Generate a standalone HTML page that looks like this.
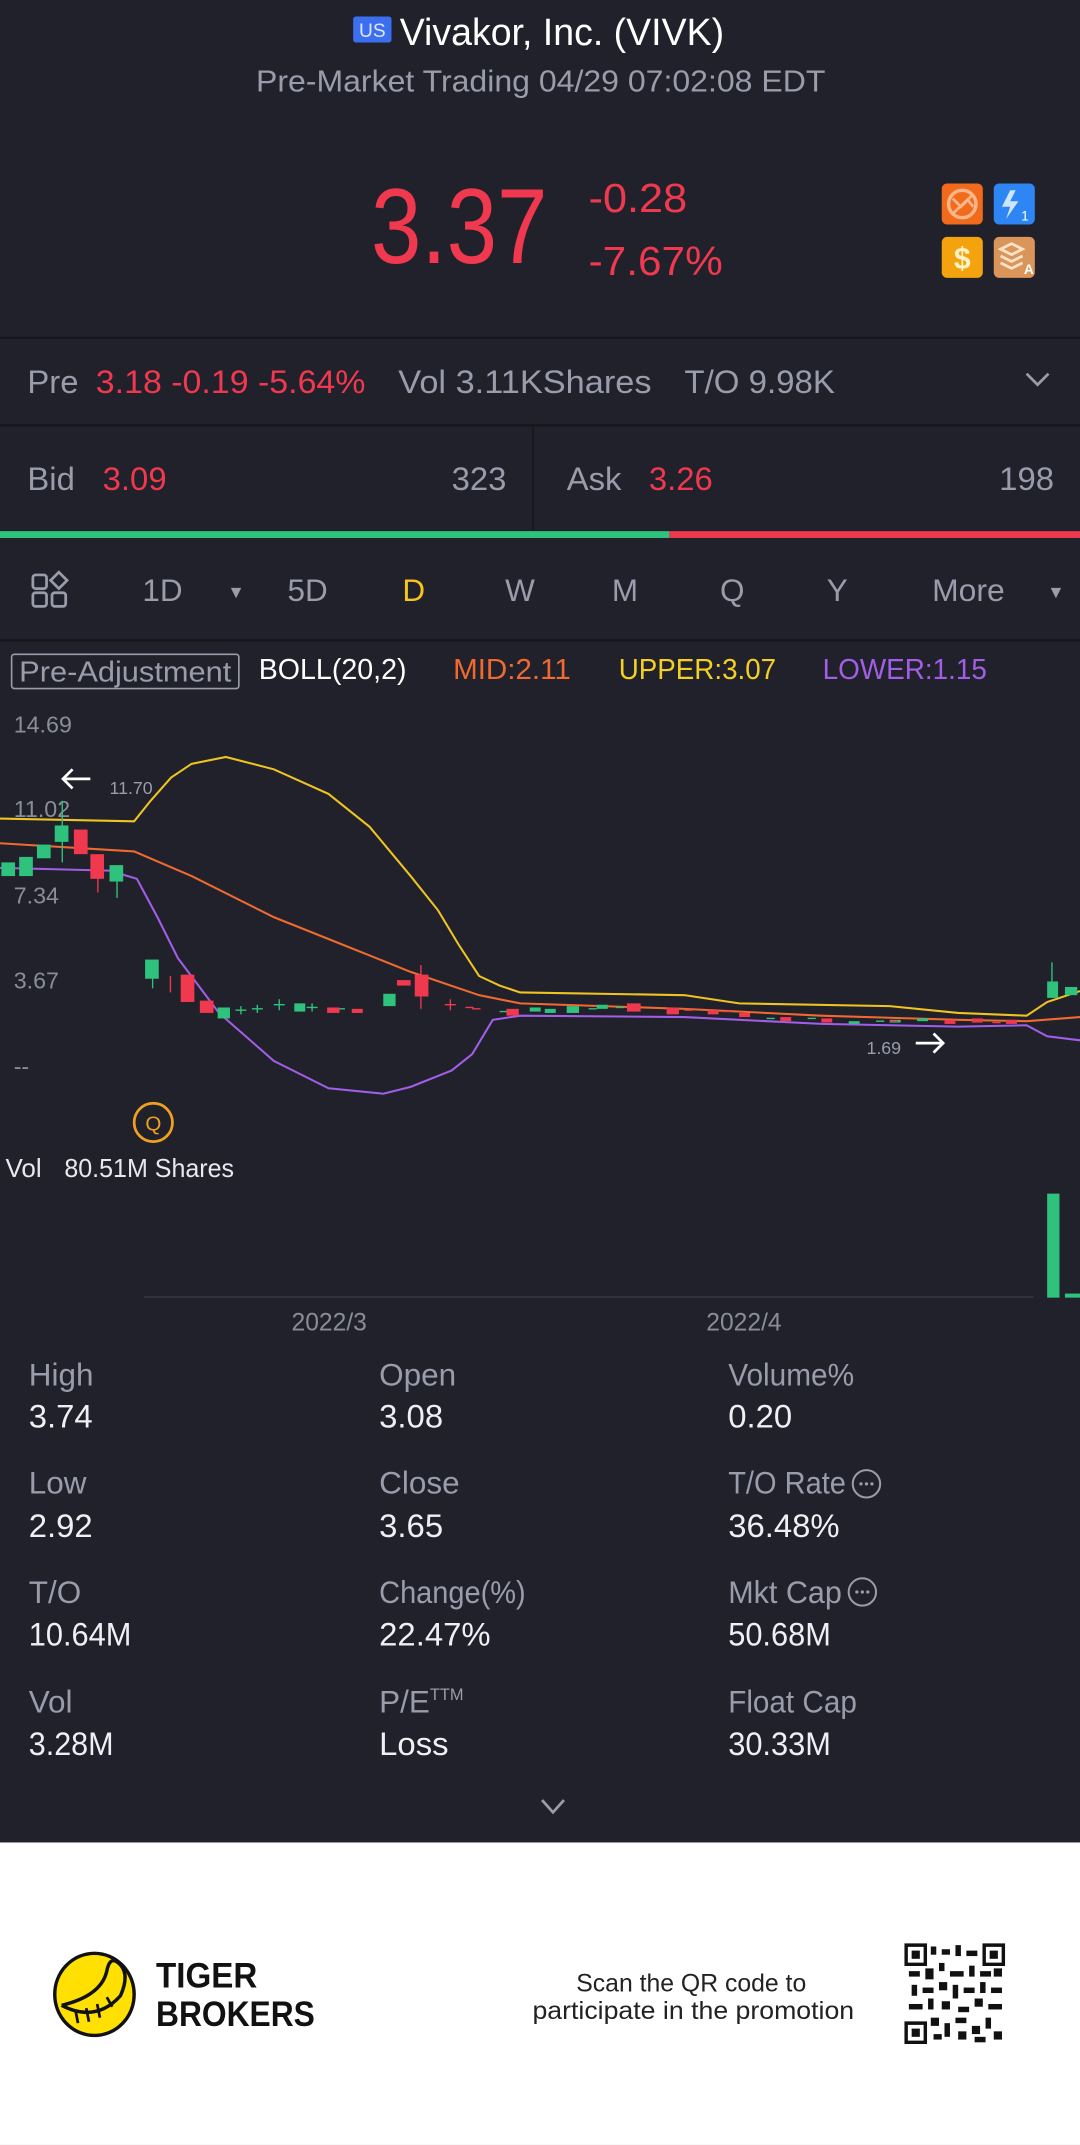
<!DOCTYPE html>
<html><head><meta charset="utf-8"><style>
html,body{margin:0;padding:0;background:#20212b;}
svg{display:block}
text{font-family:"Liberation Sans Narrow","Liberation Sans",sans-serif;}
</style></head><body>
<svg width="1080" height="2145" viewBox="0 0 789 1567" xmlns="http://www.w3.org/2000/svg">
<rect x="0" y="0" width="789" height="1347" fill="#20212b"/>
<rect x="0" y="1346" width="789" height="221" fill="#ffffff"/>
<!-- header -->
<rect x="258" y="12" width="28" height="19" rx="2" fill="#3b6ff0"/>
<text x="272" y="27" font-size="14" fill="#dfe6ff" text-anchor="middle">US</text>
<text x="292" y="33" font-size="28" fill="#ffffff" textLength="237" lengthAdjust="spacingAndGlyphs">Vivakor, Inc. (VIVK)</text>
<text x="187" y="67" font-size="22" fill="#9a9cab" textLength="416" lengthAdjust="spacingAndGlyphs">Pre-Market Trading 04/29 07:02:08 EDT</text>
<text x="271" y="192" font-size="78" fill="#f0384e" textLength="129" lengthAdjust="spacingAndGlyphs">3.37</text>
<text x="430" y="155" font-size="30" fill="#f0384e" textLength="72" lengthAdjust="spacingAndGlyphs">-0.28</text>
<text x="430" y="201" font-size="30" fill="#f0384e" textLength="98" lengthAdjust="spacingAndGlyphs">-7.67%</text>
<!-- icons -->
<rect x="688" y="134" width="30" height="30" rx="4" fill="#f26b1d"/>
<circle cx="703" cy="149" r="10" fill="none" stroke="#fbb68a" stroke-width="2.5"/>
<path d="M696 145 L702 151 L707 146 L711 151 M696 156 L711 142" stroke="#fbb68a" stroke-width="2" fill="none"/>
<rect x="726" y="134" width="30" height="30" rx="4" fill="#2e86f5"/>
<path d="M738 139 L732 151 L738 151 L735 160 L744 147 L738 147 L742 139 Z" fill="#cfe4ff"/>
<text x="746" y="161" font-size="10" fill="#fff">1</text>
<rect x="688" y="173" width="30" height="30" rx="4" fill="#f5a20f"/>
<text x="703" y="196" font-size="22" fill="#fff3c8" text-anchor="middle" font-weight="bold">$</text>
<rect x="726" y="173" width="30" height="30" rx="4" fill="#d9955a"/>
<path d="M731 182 L739 178 L747 182 L739 186 Z M731 187 L739 191 L747 187 M731 192 L739 196 L747 192" stroke="#fbe3c8" stroke-width="2" fill="none"/>
<text x="748" y="200" font-size="10" fill="#fff" font-weight="bold">A</text>
<!-- pre row -->
<rect x="0" y="246" width="789" height="1.5" fill="#14151c"/>
<text x="20" y="287" font-size="24" fill="#9a9cab">Pre</text>
<text x="70" y="287" font-size="24" fill="#f0384e" textLength="197" lengthAdjust="spacingAndGlyphs">3.18 -0.19 -5.64%</text>
<text x="291" y="287" font-size="24" fill="#9a9cab" textLength="185" lengthAdjust="spacingAndGlyphs">Vol 3.11KShares</text>
<text x="500" y="287" font-size="24" fill="#9a9cab" textLength="110" lengthAdjust="spacingAndGlyphs">T/O 9.98K</text>
<path d="M750 273 L758 281 L766 273" stroke="#9a9cab" stroke-width="2" fill="none"/>
<rect x="0" y="310" width="789" height="1.5" fill="#14151c"/>
<text x="20" y="358" font-size="24" fill="#9a9cab">Bid</text>
<text x="75" y="358" font-size="24" fill="#f0384e">3.09</text>
<text x="370" y="358" font-size="24" fill="#9a9cab" text-anchor="end">323</text>
<rect x="389" y="311" width="1" height="77" fill="#14151c"/>
<text x="414" y="358" font-size="24" fill="#9a9cab">Ask</text>
<text x="474" y="358" font-size="24" fill="#f0384e">3.26</text>
<text x="770" y="358" font-size="24" fill="#9a9cab" text-anchor="end">198</text>
<rect x="0" y="388" width="489" height="5" fill="#2fc27c"/>
<rect x="489" y="388" width="300" height="5" fill="#f0384e"/>
<!-- tabs -->
<g fill="none" stroke="#9a9cab" stroke-width="2">
<rect x="24" y="420" width="10" height="10" rx="2"/><rect x="24" y="433" width="10" height="10" rx="2"/><rect x="38" y="433" width="10" height="10" rx="2"/>
<path d="M43 418 L49 424 L43 430 L37 424 Z"/></g>
<g font-size="23" fill="#9a9cab">
<text x="104" y="439">1D</text><text x="166" y="437" font-size="13">▼</text>
<text x="210" y="439">5D</text><text x="294" y="439" fill="#f5c518">D</text>
<text x="369" y="439">W</text><text x="447" y="439">M</text><text x="526" y="439">Q</text>
<text x="604" y="439">Y</text><text x="681" y="439" textLength="53" lengthAdjust="spacingAndGlyphs">More</text><text x="765" y="437" font-size="13">▼</text></g>
<rect x="0" y="467" width="789" height="1.5" fill="#14151c"/>
<rect x="8.5" y="478" width="166" height="25" rx="2" fill="none" stroke="#9a9cab" stroke-width="1.2"/>
<text x="14" y="498" font-size="21" fill="#9a9cab" textLength="155" lengthAdjust="spacingAndGlyphs">Pre-Adjustment</text>
<text x="189" y="496" font-size="21" fill="#ffffff" textLength="108" lengthAdjust="spacingAndGlyphs">BOLL(20,2)</text>
<text x="331" y="496" font-size="21" fill="#f06a30" textLength="86" lengthAdjust="spacingAndGlyphs">MID:2.11</text>
<text x="452" y="496" font-size="21" fill="#f5d020" textLength="115" lengthAdjust="spacingAndGlyphs">UPPER:3.07</text>
<text x="601" y="496" font-size="21" fill="#a35ee8" textLength="120" lengthAdjust="spacingAndGlyphs">LOWER:1.15</text>
<!-- chart labels -->
<g font-size="17" fill="#8a8c99">
<text x="10" y="535">14.69</text><text x="10" y="597">11.02</text><text x="10" y="660">7.34</text><text x="10" y="722">3.67</text><text x="10" y="785">--</text></g>
<path d="M66 569 L46 569 M53 562 L46 569 L53 576" stroke="#fff" stroke-width="2" fill="none"/>
<text x="80" y="580" font-size="13" fill="#9a9cab">11.70</text>
<text x="633" y="770" font-size="13" fill="#9a9cab">1.69</text>
<path d="M669 762 L689 762 M682 755 L689 762 L682 769" stroke="#fff" stroke-width="2" fill="none"/>
<!-- bands -->
<path d="M0 598 L98 600 L110 585 L125 568 L140 558 L165 553 L200 562 L240 580 L270 604 L300 640 L320 665 L335 690 L350 713 L365 720 L380 725 L500 727 L540 733 L650 735 L700 740 L750 742 L765 732 L789 724" stroke="#f0c420" stroke-width="1.5" fill="none"/>
<path d="M0 616 L98 622 L140 640 L200 670 L250 690 L300 710 L350 727 L380 733 L500 737 L600 742 L700 745 L750 746 L789 743" stroke="#f06a30" stroke-width="1.5" fill="none"/>
<path d="M0 634 L80 636 L100 642 L115 670 L130 700 L160 740 L200 775 L240 795 L280 799 L300 794 L330 782 L345 770 L360 745 L380 742 L500 743 L600 748 L700 750 L750 749 L765 757 L789 760" stroke="#a35ee8" stroke-width="1.5" fill="none"/>
<!-- candles -->
<g fill="#2fc27c">
<rect x="1" y="630" width="10" height="10"/><rect x="14" y="626" width="10" height="14"/><rect x="27" y="617" width="10" height="10"/><rect x="40" y="603" width="10" height="12"/><rect x="45" y="585" width="1" height="45"/>
<rect x="80" y="632" width="10" height="12"/><rect x="85" y="640" width="1" height="16"/>
<rect x="106" y="701" width="10" height="14"/><rect x="111" y="714" width="1" height="8"/>
<rect x="159" y="736" width="9" height="8"/><rect x="215" y="733" width="8" height="6"/><rect x="280" y="726" width="9" height="9"/>
<rect x="387" y="736" width="8" height="3"/><rect x="398" y="737" width="8" height="3"/><rect x="414" y="735" width="9" height="5"/><rect x="436" y="734" width="8" height="3"/>
<rect x="620" y="746" width="8" height="2"/><rect x="650" y="745" width="8" height="2"/><rect x="670" y="744" width="8" height="2"/>
<rect x="765" y="717" width="8" height="12"/><rect x="768" y="703" width="1" height="14"/><rect x="778" y="721" width="9" height="6"/>
<rect x="765" y="872" width="9" height="76"/><rect x="778" y="945" width="11" height="3"/>
</g>
<g fill="#2fc27c" stroke="#2fc27c" stroke-width="1">
<path d="M172 738 h8 M176 735 v6 M184 737 h8 M188 734 v6 M200 734 h8 M204 730 v8 M224 736 h8 M228 733 v6 M246 737 h6"/>
<path d="M365 739 h6 M430 737 h6 M450 736 h6 M560 744 h6 M590 744 h6 M640 746 h6"/>
</g>
<g fill="#f0384e">
<rect x="54" y="606" width="10" height="18"/><rect x="66" y="624" width="10" height="18"/><rect x="71" y="640" width="1" height="12"/>
<rect x="132" y="712" width="10" height="20"/><rect x="146" y="731" width="10" height="9"/><rect x="124" y="713" width="1" height="12"/>
<rect x="290" y="716" width="10" height="4"/><rect x="303" y="712" width="10" height="16"/><rect x="307" y="705" width="1" height="32"/>
<rect x="239" y="736" width="9" height="4"/><rect x="257" y="737" width="8" height="3"/>
<rect x="370" y="737" width="9" height="5"/><rect x="458" y="733" width="10" height="6"/><rect x="487" y="736" width="9" height="5"/><rect x="517" y="738" width="8" height="3"/>
<rect x="540" y="740" width="8" height="3"/><rect x="570" y="743" width="8" height="3"/><rect x="600" y="744" width="8" height="3"/><rect x="690" y="745" width="8" height="3"/><rect x="710" y="744" width="8" height="3"/><rect x="735" y="745" width="8" height="3"/>
</g>
<g stroke="#f0384e" stroke-width="1">
<path d="M325 734 h8 M329 730 v8 M340 736 h6 M345 737 h6 M500 738 h6 M528 739 h6 M650 746 h6 M725 747 h6"/>
</g>
<g fill="#3a3b46"><rect x="105" y="947" width="650" height="1"/></g>
<circle cx="112" cy="820" r="14" fill="none" stroke="#f0a020" stroke-width="2"/>
<text x="112" y="826" font-size="15" fill="#f0a020" text-anchor="middle">Q</text>
<text x="4" y="860" font-size="19" fill="#e8e8ee">Vol</text>
<text x="47" y="860" font-size="19" fill="#e8e8ee" textLength="124" lengthAdjust="spacingAndGlyphs">80.51M Shares</text>
<text x="213" y="972" font-size="18" fill="#8a8c99">2022/3</text>
<text x="516" y="972" font-size="18" fill="#8a8c99">2022/4</text>
<!-- stats -->
<g font-size="23" fill="#9a9cab">
<text x="21" y="1012">High</text><text x="277" y="1012">Open</text><text x="532" y="1012" textLength="92" lengthAdjust="spacingAndGlyphs">Volume%</text>
<text x="21" y="1091">Low</text><text x="277" y="1091">Close</text><text x="532" y="1091" textLength="86" lengthAdjust="spacingAndGlyphs">T/O Rate</text>
<text x="21" y="1171">T/O</text><text x="277" y="1171" textLength="107" lengthAdjust="spacingAndGlyphs">Change(%)</text><text x="532" y="1171" textLength="83" lengthAdjust="spacingAndGlyphs">Mkt Cap</text>
<text x="21" y="1251">Vol</text><text x="277" y="1251">P/E<tspan font-size="12" dy="-9">TTM</tspan></text><text x="532" y="1251" textLength="94" lengthAdjust="spacingAndGlyphs">Float Cap</text></g>
<g fill="none" stroke="#9a9cab" stroke-width="1.5"><circle cx="633" cy="1084" r="10"/><circle cx="630" cy="1163" r="10"/></g>
<g fill="#9a9cab"><circle cx="629" cy="1084" r="1.2"/><circle cx="633" cy="1084" r="1.2"/><circle cx="637" cy="1084" r="1.2"/><circle cx="626" cy="1163" r="1.2"/><circle cx="630" cy="1163" r="1.2"/><circle cx="634" cy="1163" r="1.2"/></g>
<g font-size="24" fill="#f0f0f4">
<text x="21" y="1043">3.74</text><text x="277" y="1043">3.08</text><text x="532" y="1043">0.20</text>
<text x="21" y="1123">2.92</text><text x="277" y="1123">3.65</text><text x="532" y="1123">36.48%</text>
<text x="21" y="1202" textLength="75" lengthAdjust="spacingAndGlyphs">10.64M</text><text x="277" y="1202">22.47%</text><text x="532" y="1202" textLength="75" lengthAdjust="spacingAndGlyphs">50.68M</text>
<text x="21" y="1282" textLength="62" lengthAdjust="spacingAndGlyphs">3.28M</text><text x="277" y="1282">Loss</text><text x="532" y="1282" textLength="75" lengthAdjust="spacingAndGlyphs">30.33M</text></g>
<path d="M396 1315 L404 1324 L412 1315" stroke="#9a9cab" stroke-width="2" fill="none"/>
<!-- footer -->
<ellipse cx="69" cy="1457" rx="29" ry="30" fill="#ffe000" stroke="#111" stroke-width="2.5"/>
<path d="M45 1465 Q70 1478 88 1458 Q96 1440 85 1433 Q80 1430 78 1440 Q74 1458 45 1465" fill="none" stroke="#111" stroke-width="2.5"/>
<path d="M55 1468 L57 1478 M63 1467 L65 1477 M71 1464 L73 1474 M78 1459 L82 1466" stroke="#111" stroke-width="2"/>
<text x="114" y="1452" font-size="26" font-weight="bold" fill="#111" textLength="74" lengthAdjust="spacingAndGlyphs">TIGER</text>
<text x="114" y="1480" font-size="26" font-weight="bold" fill="#111" textLength="116" lengthAdjust="spacingAndGlyphs">BROKERS</text>
<text x="421" y="1455" font-size="18" fill="#222" textLength="168" lengthAdjust="spacingAndGlyphs">Scan the QR code to</text>
<text x="389" y="1475" font-size="18" fill="#222" textLength="235" lengthAdjust="spacingAndGlyphs">participate in the promotion</text>
<g fill="#111">
<rect x="662" y="1421" width="71" height="71" fill="#fff"/>
<path d="M662 1421h14v14h-14z M719 1421h14v14h-14z M662 1478h14v14h-14z" fill="none" stroke="#111" stroke-width="2.5"/>
<rect x="666" y="1425" width="6" height="6"/><rect x="723" y="1425" width="6" height="6"/><rect x="666" y="1482" width="6" height="6"/>
<rect x="680" y="1422" width="4" height="6"/><rect x="688" y="1424" width="6" height="4"/><rect x="698" y="1421" width="4" height="8"/><rect x="706" y="1425" width="8" height="4"/>
<rect x="664" y="1440" width="8" height="4"/><rect x="676" y="1438" width="6" height="8"/><rect x="686" y="1434" width="4" height="6"/><rect x="694" y="1440" width="10" height="4"/><rect x="708" y="1436" width="4" height="8"/><rect x="716" y="1440" width="8" height="4"/><rect x="726" y="1438" width="6" height="6"/>
<rect x="666" y="1450" width="4" height="8"/><rect x="674" y="1452" width="8" height="4"/><rect x="686" y="1448" width="6" height="6"/><rect x="696" y="1450" width="4" height="10"/><rect x="704" y="1452" width="8" height="4"/><rect x="716" y="1448" width="4" height="8"/><rect x="724" y="1452" width="8" height="4"/>
<rect x="664" y="1464" width="10" height="4"/><rect x="678" y="1460" width="4" height="8"/><rect x="688" y="1462" width="6" height="6"/><rect x="700" y="1466" width="8" height="4"/><rect x="712" y="1460" width="6" height="6"/><rect x="722" y="1464" width="10" height="4"/>
<rect x="680" y="1474" width="6" height="6"/><rect x="690" y="1478" width="4" height="10"/><rect x="698" y="1474" width="8" height="4"/><rect x="710" y="1480" width="6" height="6"/><rect x="720" y="1474" width="4" height="8"/><rect x="726" y="1484" width="6" height="6"/>
<rect x="682" y="1486" width="6" height="4"/><rect x="700" y="1484" width="6" height="6"/><rect x="712" y="1488" width="8" height="4"/>
</g>
</svg>
</body></html>
